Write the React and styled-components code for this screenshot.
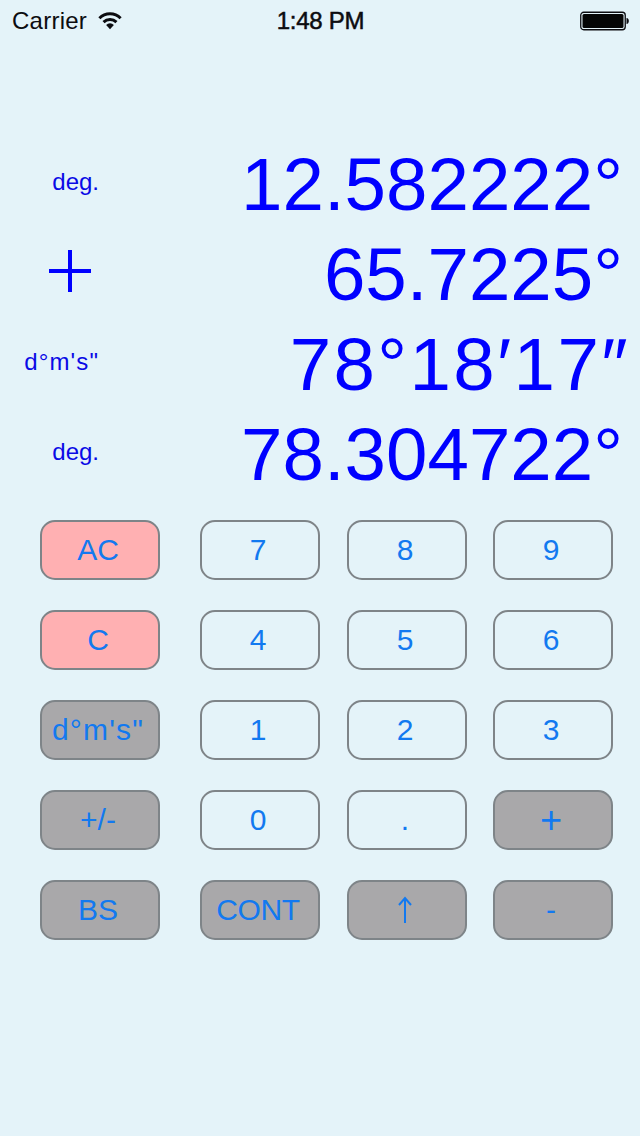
import React from "react";
import styled, { createGlobalStyle } from "styled-components";

const Global = createGlobalStyle`
  html, body { margin: 0; padding: 0; background: #e4f3f9; }
  body { font-family: "Liberation Sans", Arial, sans-serif; }
`;

const Screen = styled.div`
  width: 640px;
  height: 1136px;
  background: #e4f3f9;
  overflow: hidden;
  display: flex;
  flex-direction: column;
`;

const StatusBar = styled.div`
  height: 40px;
  display: grid;
  grid-template-columns: 1fr auto 1fr;
  align-items: center;
  padding: 1px 11px 0 12px;
  box-sizing: border-box;
  color: #0c0c10;
  font-size: 24px;
`;

const StatusLeft = styled.div`
  display: flex;
  align-items: center;
  gap: 11px;
  letter-spacing: 0.25px;
`;

const Clock = styled.div`
  letter-spacing: -0.25px;
  -webkit-text-stroke: 0.5px #0c0c10;
`;

const StatusRight = styled.div`
  display: flex;
  justify-content: flex-end;
`;

const Display = styled.div`
  margin-top: 100px;
  display: flex;
  flex-direction: column;
  padding-right: 17px;
`;

const DisplayRow = styled.div`
  height: 90px;
  display: flex;
  align-items: center;
  justify-content: space-between;
  color: #0000ff;
`;

const Label = styled.div`
  width: 99px;
  text-align: right;
  font-size: 24px;
  margin-top: -7px;
  color: #0a0ae6;
  letter-spacing: ${(p) => (p.$wide ? "1.1px" : "0")};
`;

const Operator = styled.div`
  width: 42px;
  height: 42px;
  margin: -9px 0 0 49px;
  color: #0000ff;
`;

const Value = styled.div`
  font-size: 74.5px;
  line-height: 90px;
  white-space: nowrap;
  letter-spacing: ${(p) => (p.$wide ? "2.4px" : "0")};
  margin-right: ${(p) => (p.$wide ? "-7px" : "0")};
`;

const Keypad = styled.div`
  margin-top: 20px;
  padding-left: 40px;
  display: grid;
  grid-template-columns: 160px 147px 146px 120px;
  grid-auto-rows: 60px;
  row-gap: 30px;
`;

const fills = { pink: "#ffb0b2", gray: "#a9a8aa", plain: "transparent" };

const Key = styled.div`
  box-sizing: border-box;
  width: 120px;
  height: 60px;
  padding-right: 4px;
  border: 2px solid #7e8488;
  border-radius: 15px;
  background: ${(p) => fills[p.$tone]};
  color: #1279f0;
  font-size: ${(p) => p.$size || 30}px;
  letter-spacing: ${(p) => p.$spread || 0}px;
  display: flex;
  align-items: center;
  justify-content: center;
  white-space: nowrap;
`;

const Wifi = () => (
  <svg width="24" height="19" viewBox="0 0 26 20" fill="none">
    <path d="M1.5 7.6 A16 16 0 0 1 24.5 7.6" stroke="#0c0c10" strokeWidth="3.2" />
    <path d="M6 11.8 A10 10 0 0 1 20 11.8" stroke="#0c0c10" strokeWidth="3.2" />
    <path d="M13 19.5 L8.8 14.8 A6 6 0 0 1 17.2 14.8 Z" fill="#0c0c10" />
  </svg>
);

const Battery = () => (
  <svg width="49" height="20" viewBox="0 0 49 20">
    <rect x="0.75" y="1.25" width="44.5" height="17.5" rx="3" fill="#e4f3f9" stroke="#0c0c10" strokeWidth="1.3" />
    <rect x="2.5" y="3" width="41" height="14" rx="1.5" fill="#050505" />
    <path d="M46.5 7 C48.2 7.2 48.8 8.5 48.8 10 C48.8 11.5 48.2 12.8 46.5 13 Z" fill="#0c0c10" />
  </svg>
);

const Plus = () => (
  <svg width="42" height="42" viewBox="0 0 42 42">
    <path d="M0 21 H42 M21 0 V42" stroke="currentColor" strokeWidth="4" />
  </svg>
);

const UpArrow = () => (
  <svg width="14" height="28" viewBox="0 0 14 28" fill="none">
    <path d="M7 27 V2 M1 9 L7 2 L13 9" stroke="currentColor" strokeWidth="2" />
  </svg>
);

const rows = [
  { label: "deg.", value: "12.582222°" },
  { op: true, value: "65.7225°" },
  { label: "d°m's\"", wide: true, value: "78°18′17″" },
  { label: "deg.", value: "78.304722°" },
];

const keys = [
  { t: "AC", tone: "pink" }, { t: "7", tone: "plain" }, { t: "8", tone: "plain" }, { t: "9", tone: "plain" },
  { t: "C", tone: "pink" }, { t: "4", tone: "plain" }, { t: "5", tone: "plain" }, { t: "6", tone: "plain" },
  { t: "d°m's\"", tone: "gray", spread: 1.2 }, { t: "1", tone: "plain" }, { t: "2", tone: "plain" }, { t: "3", tone: "plain" },
  { t: "+/-", tone: "gray" }, { t: "0", tone: "plain" }, { t: ".", tone: "plain" }, { t: "+", tone: "gray", size: 38 },
  { t: "BS", tone: "gray" }, { t: "CONT", tone: "gray", spread: -0.4 }, { t: <UpArrow />, id: "up", tone: "gray" }, { t: "-", tone: "gray" },
];

export default function App() {
  return (
    <Screen>
      <Global />
      <StatusBar>
        <StatusLeft>
          Carrier
          <Wifi />
        </StatusLeft>
        <Clock>1:48 PM</Clock>
        <StatusRight>
          <Battery />
        </StatusRight>
      </StatusBar>
      <Display>
        {rows.map((r) => (
          <DisplayRow key={r.value}>
            {r.op ? (
              <Operator>
                <Plus />
              </Operator>
            ) : (
              <Label $wide={r.wide}>{r.label}</Label>
            )}
            <Value $wide={r.wide}>{r.value}</Value>
          </DisplayRow>
        ))}
      </Display>
      <Keypad>
        {keys.map((k) => (
          <Key key={k.id || k.t} $tone={k.tone} $size={k.size} $spread={k.spread}>
            {k.t}
          </Key>
        ))}
      </Keypad>
    </Screen>
  );
}
